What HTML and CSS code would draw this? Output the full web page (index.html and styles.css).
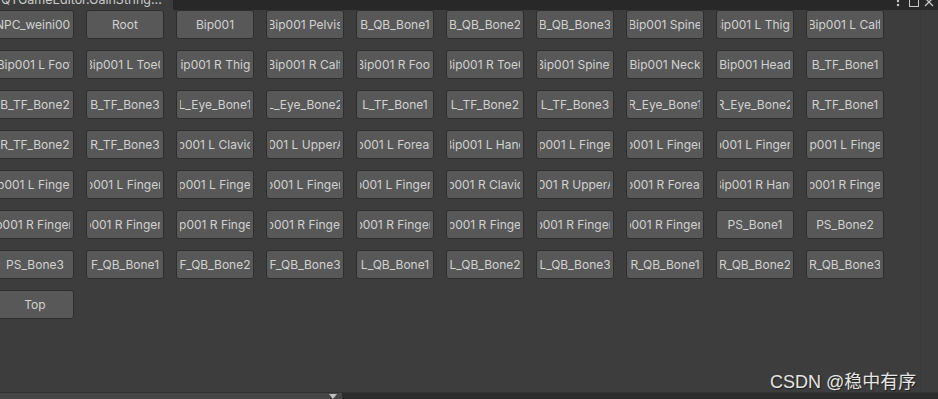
FILE: index.html
```html
<!DOCTYPE html>
<html lang="en">

<head>
    <meta charset="UTF-8">
    <meta name="viewport" content="width=device-width, initial-scale=1.0">
    <title>QTGameEditor.GainString</title>
    <link rel="stylesheet" href="styles.css">
</head>

<body>
    <div class="window">
        <div class="tabbar">
            <div class="tab">QTGameEditor.GainString...</div>
            <div class="tab-tools">
                <svg width="44" height="16" viewBox="0 0 44 16">
                    <circle cx="4" cy="3" r="1.2" fill="#c8c8c8" />
                    <circle cx="4" cy="7" r="1.2" fill="#c8c8c8" />
                    <circle cx="4" cy="11" r="1.2" fill="#c8c8c8" />
                    <rect x="15.5" y="4.5" width="9" height="8" fill="none" stroke="#c8c8c8" />
                    <path d="M31 4 L39 12 M39 4 L31 12" stroke="#c8c8c8" stroke-width="1.3" />
                </svg>
            </div>
        </div>

        <div class="main">
            <div class="content">
                <div class="bones" id="bones"></div>
            </div>
            <div class="vscroll"></div>
        </div>

        <div class="hscroll">
            <div class="hscroll-track"><span class="arrow"></span></div>
            <div class="hscroll-rest"></div>
        </div>

        <div class="watermark">CSDN @稳中有序</div>
    </div>

    <script>
        const names = [
            'NPC_weini001', 'Root', 'Bip001', 'Bip001 Pelvis', 'B_QB_Bone1', 'B_QB_Bone2', 'B_QB_Bone3', 'Bip001 Spine', 'Bip001 L Thigh', 'Bip001 L Calf',
            'Bip001 L Foot', 'Bip001 L Toe0', 'Bip001 R Thigh', 'Bip001 R Calf', 'Bip001 R Foot', 'Bip001 R Toe0', 'Bip001 Spine1', 'Bip001 Neck', 'Bip001 Head', 'B_TF_Bone1',
            'B_TF_Bone2', 'B_TF_Bone3', 'L_Eye_Bone1', 'L_Eye_Bone2', 'L_TF_Bone1', 'L_TF_Bone2', 'L_TF_Bone3', 'R_Eye_Bone1', 'R_Eye_Bone2', 'R_TF_Bone1',
            'R_TF_Bone2', 'R_TF_Bone3', 'Bip001 L Clavicle', 'Bip001 L UpperArm', 'Bip001 L Forearm', 'Bip001 L Hand', 'Bip001 L Finger0', 'Bip001 L Finger01', 'Bip001 L Finger02', 'Bip001 L Finger1',
            'Bip001 L Finger11', 'Bip001 L Finger12', 'Bip001 L Finger2', 'Bip001 L Finger21', 'Bip001 L Finger22', 'Bip001 R Clavicle', 'Bip001 R UpperArm', 'Bip001 R Forearm', 'Bip001 R Hand', 'Bip001 R Finger0',
            'Bip001 R Finger01', 'Bip001 R Finger02', 'Bip001 R Finger1', 'Bip001 R Finger11', 'Bip001 R Finger12', 'Bip001 R Finger2', 'Bip001 R Finger21', 'Bip001 R Finger22', 'PS_Bone1', 'PS_Bone2',
            'PS_Bone3', 'F_QB_Bone1', 'F_QB_Bone2', 'F_QB_Bone3', 'L_QB_Bone1', 'L_QB_Bone2', 'L_QB_Bone3', 'R_QB_Bone1', 'R_QB_Bone2', 'R_QB_Bone3',
            'Top'
        ]
        const box = document.getElementById('bones')

        names.forEach(function (n) {
            const btn = document.createElement('button')
            btn.className = 'bone-btn'
            btn.innerHTML = `<span class="clip"><span class="label">${n}</span></span>`
            box.appendChild(btn)
        })
    </script>
</body>

</html>
```

FILE: styles.css
```css
* {
    margin: 0;
    padding: 0;
    box-sizing: border-box;
}

body {
    width: 938px;
    height: 399px;
    overflow: hidden;
    background-color: #3d3d3d;
    font-family: Inter, "Noto Sans", sans-serif;
}

.window {
    position: relative;
    height: 399px;
    display: flex;
    flex-direction: column;
}

/* tab strip, cut at the top of the shot */
.tabbar {
    height: 10px;
    display: flex;
    background-color: #282828;
    overflow: hidden;
}

.tab {
    width: 173px;
    height: 17px;
    margin-top: -7px;
    padding-left: 1px;
    background-color: #3d3d3d;
    color: #cccccc;
    font-size: 12.5px;
    line-height: 14px;
    white-space: nowrap;
    overflow: hidden;
}

.tab-tools {
    margin-left: auto;
    margin-top: -6px;
}

.main {
    flex: 1;
    display: flex;
}

.content {
    flex: 1;
    overflow: hidden;
}

.bones {
    margin-left: -4px;
    display: grid;
    grid-template-columns: repeat(10, 78px);
    grid-auto-rows: 29px;
    column-gap: 12px;
    row-gap: 11px;
}

.bone-btn {
    width: 78px;
    height: 29px;
    padding: 0 3px;
    display: flex;
    align-items: center;
    background-color: #585858;
    border: 1px solid #2e2e2e;
    border-radius: 3px;
    color: #d2d2d2;
    font-family: Inter, "Noto Sans", sans-serif;
    font-size: 12px;
}

.clip {
    width: 100%;
    display: flex;
    justify-content: center;
    overflow: hidden;
}

.label {
    flex-shrink: 0;
    white-space: nowrap;
}

.vscroll {
    width: 18px;
    border-left: 1px solid #383838;
}

.hscroll {
    height: 7px;
    display: flex;
    border-top: 1px solid #323232;
}

.hscroll-track {
    width: 342px;
    position: relative;
    background-color: #464646;
}

.arrow {
    position: absolute;
    right: 5px;
    top: 1px;
    width: 0;
    height: 0;
    border-left: 4px solid transparent;
    border-right: 4px solid transparent;
    border-top: 5px solid #bdbdbd;
}

.hscroll-rest {
    flex: 1;
    background-color: #2c2c2c;
}

.watermark {
    position: absolute;
    left: 770px;
    top: 367px;
    color: #e6e6e6;
    font-family: "Liberation Sans", "Noto Sans CJK SC", sans-serif;
    font-size: 18px;
    text-shadow: 1px 1px 1px #1e1e1e;
    white-space: nowrap;
}
```
